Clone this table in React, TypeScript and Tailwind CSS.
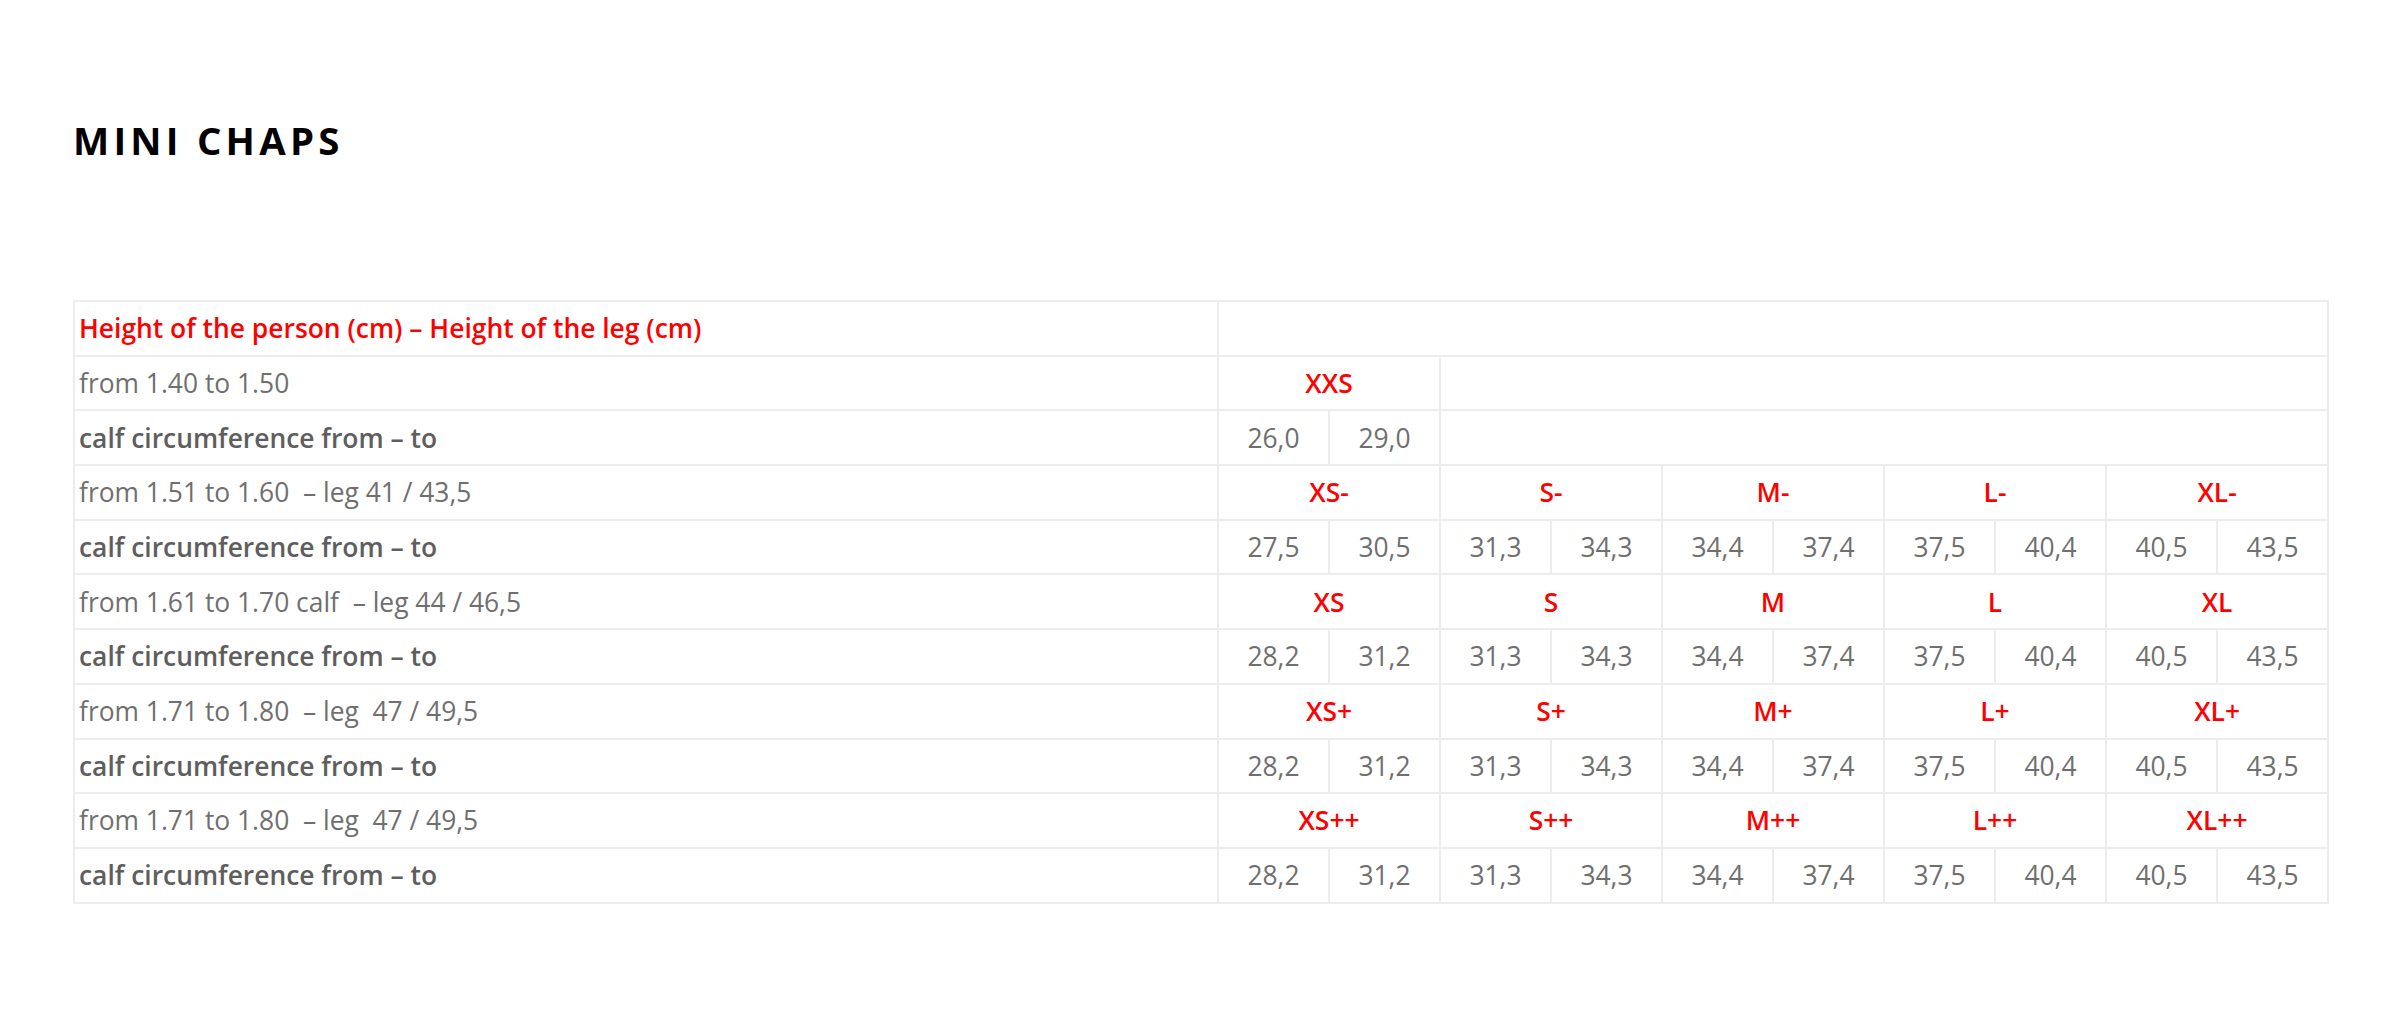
const sizeRows = [
  {
    label: "from 1.51 to 1.60  – leg 41 / 43,5",
    sizes: ["XS-", "S-", "M-", "L-", "XL-"],
    values: ["27,5", "30,5", "31,3", "34,3", "34,4", "37,4", "37,5", "40,4", "40,5", "43,5"],
  },
  {
    label: "from 1.61 to 1.70 calf  – leg 44 / 46,5",
    sizes: ["XS", "S", "M", "L", "XL"],
    values: ["28,2", "31,2", "31,3", "34,3", "34,4", "37,4", "37,5", "40,4", "40,5", "43,5"],
  },
  {
    label: "from 1.71 to 1.80  – leg  47 / 49,5",
    sizes: ["XS+", "S+", "M+", "L+", "XL+"],
    values: ["28,2", "31,2", "31,3", "34,3", "34,4", "37,4", "37,5", "40,4", "40,5", "43,5"],
  },
  {
    label: "from 1.71 to 1.80  – leg  47 / 49,5",
    sizes: ["XS++", "S++", "M++", "L++", "XL++"],
    values: ["28,2", "31,2", "31,3", "34,3", "34,4", "37,4", "37,5", "40,4", "40,5", "43,5"],
  },
];

const cell = "h-[54.7px] border-2 border-[#ededed] p-0 align-middle";
const labelCell = cell + " pl-[4px] text-left whitespace-pre";
const sizeCell = cell + " text-center font-semibold text-[#ff0000]";
const numCell = cell + " text-center text-[#6f6f6f]";

function CalfLabel() {
  return <td className={labelCell + " font-semibold text-[#5e5e5e]"}>calf circumference from – to</td>;
}

export default function App() {
  return (
    <div
      className="min-h-screen bg-white pl-[73px] pt-[117px]"
      style={{ fontFamily: '"Open Sans", "Noto Sans", sans-serif' }}
    >
      <h1 className="text-[38.4px] leading-[46px] font-bold tracking-[0.11em] text-black">MINI CHAPS</h1>

      <table className="mt-[137px] w-[2254px] table-fixed border-collapse text-[26.4px] leading-none">
        <colgroup>
          <col className="w-[1144px]" />
          {[...Array(10)].map((_, i) => (
            <col key={i} className="w-[111px]" />
          ))}
        </colgroup>
        <tbody>
          <tr>
            <td className={labelCell + " font-semibold text-[#ff0000]"}>
              Height of the person (cm) – Height of the leg (cm)
            </td>
            <td className={cell} colSpan={10}></td>
          </tr>
          <tr>
            <td className={labelCell + " text-[#6f6f6f]"}>from 1.40 to 1.50</td>
            <td className={sizeCell} colSpan={2}>XXS</td>
            <td className={cell} colSpan={8}></td>
          </tr>
          <tr>
            <CalfLabel />
            <td className={numCell}>26,0</td>
            <td className={numCell}>29,0</td>
            <td className={cell} colSpan={8}></td>
          </tr>
          {sizeRows.map((row, r) => (
            <>
              <tr key={"s" + r}>
                <td className={labelCell + " text-[#6f6f6f]"}>{row.label}</td>
                {row.sizes.map((s) => (
                  <td key={s} className={sizeCell} colSpan={2}>
                    {s}
                  </td>
                ))}
              </tr>
              <tr key={"v" + r}>
                <CalfLabel />
                {row.values.map((v, i) => (
                  <td key={i} className={numCell}>
                    {v}
                  </td>
                ))}
              </tr>
            </>
          ))}
        </tbody>
      </table>
    </div>
  );
}
